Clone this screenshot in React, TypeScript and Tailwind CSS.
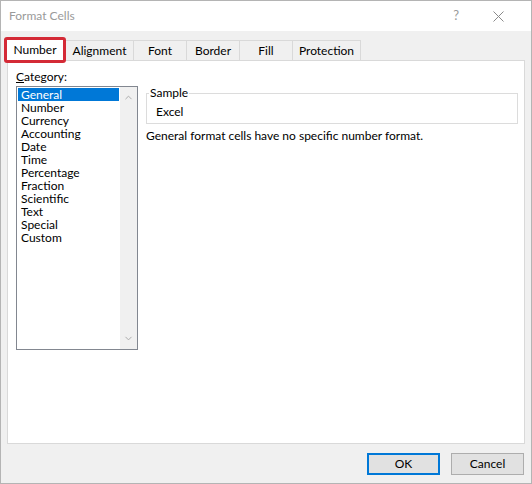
import { ChevronUp, ChevronDown } from 'lucide-react'

const tabs = ['Alignment', 'Font', 'Border', 'Fill', 'Protection']
const tabWidths = ['w-[68px]', 'w-[53px]', 'w-[53px]', 'w-[53px]', 'w-[68px]']

const categories = [
  'General',
  'Number',
  'Currency',
  'Accounting',
  'Date',
  'Time',
  'Percentage',
  'Fraction',
  'Scientific',
  'Text',
  'Special',
  'Custom',
]

export default function App() {
  return (
    <div
      className="w-[532px] h-[484px] bg-[#f0f0f0] border border-[#b4b4b4] flex flex-col text-[12px] text-black overflow-hidden"
      style={{ fontFamily: 'Lato, "Noto Sans", sans-serif' }}
    >
      {/* Title bar */}
      <div className="h-[30px] bg-white flex items-center pl-[8px] shrink-0">
        <span className="text-[#9a9a9a] flex-1">Format Cells</span>
        <span className="text-[#9a9a9a] text-[13px] mr-[34px]">?</span>
        <svg width="11" height="11" viewBox="0 0 11 11" className="mr-[27px]">
          <path d="M0.5 0.5 L10.5 10.5 M10.5 0.5 L0.5 10.5" stroke="#8a8a8a" strokeWidth="1" />
        </svg>
      </div>

      {/* Tabs */}
      <div className="flex items-end pl-[3px] pt-[6px] h-[29px] shrink-0">
        <div className="relative z-10 w-[62px] h-[26px] -mb-[3px] bg-white border-[3px] border-[#d42a36] rounded-[3px] flex items-center justify-center">
          Number
        </div>
        {tabs.map((t, i) => (
          <div
            key={t}
            className={`${tabWidths[i]} h-[20px] bg-[#f0f0f0] border-t border-r border-[#d9d9d9] flex items-center justify-center`}
          >
            {t}
          </div>
        ))}
      </div>

      {/* Panel */}
      <div className="mx-[6px] h-[384px] bg-white border border-[#d9d9d9] flex gap-[8px] pl-[8px] pt-[9px] shrink-0">
        <div className="flex flex-col">
          <div className="leading-[14px]">
            <span className="underline">C</span>ategory:
          </div>
          <div className="mt-[2px] w-[122px] h-[264px] border border-[#828790] flex">
            <div className="flex-1 flex flex-col p-[1px]">
              {categories.map((c, i) => (
                <div
                  key={c}
                  className={`h-[13px] leading-[13px] pl-[3px] ${i === 0 ? 'bg-[#0078d7] text-white' : ''}`}
                >
                  {c}
                </div>
              ))}
            </div>
            <div className="w-[17px] bg-[#f0f0f0] flex flex-col items-center justify-between py-[5px]">
              <ChevronUp size={11} strokeWidth={2} className="text-[#a6a6a6]" />
              <ChevronDown size={11} strokeWidth={2} className="text-[#a6a6a6]" />
            </div>
          </div>
        </div>

        <div className="flex-1 flex flex-col pr-[6px] pt-[16px]">
          <fieldset className="border border-[#dcdcdc] pl-[2px] h-[38px]">
            <legend className="px-[1px] leading-[14px]">Sample</legend>
            <div className="pl-[7px] mt-[4px] leading-[16px]">Excel</div>
          </fieldset>
          <div className="mt-[4px] leading-[16px]">General format cells have no specific number format.</div>
        </div>
      </div>

      {/* Footer */}
      <div className="flex justify-end gap-[11px] pr-[7px] pt-[9px]">
        <button className="w-[73px] h-[22px] bg-[#e1e1e1] border-2 border-[#0078d7] leading-none">OK</button>
        <button className="w-[73px] h-[22px] bg-[#e1e1e1] border border-[#adadad] leading-none">Cancel</button>
      </div>
    </div>
  )
}
